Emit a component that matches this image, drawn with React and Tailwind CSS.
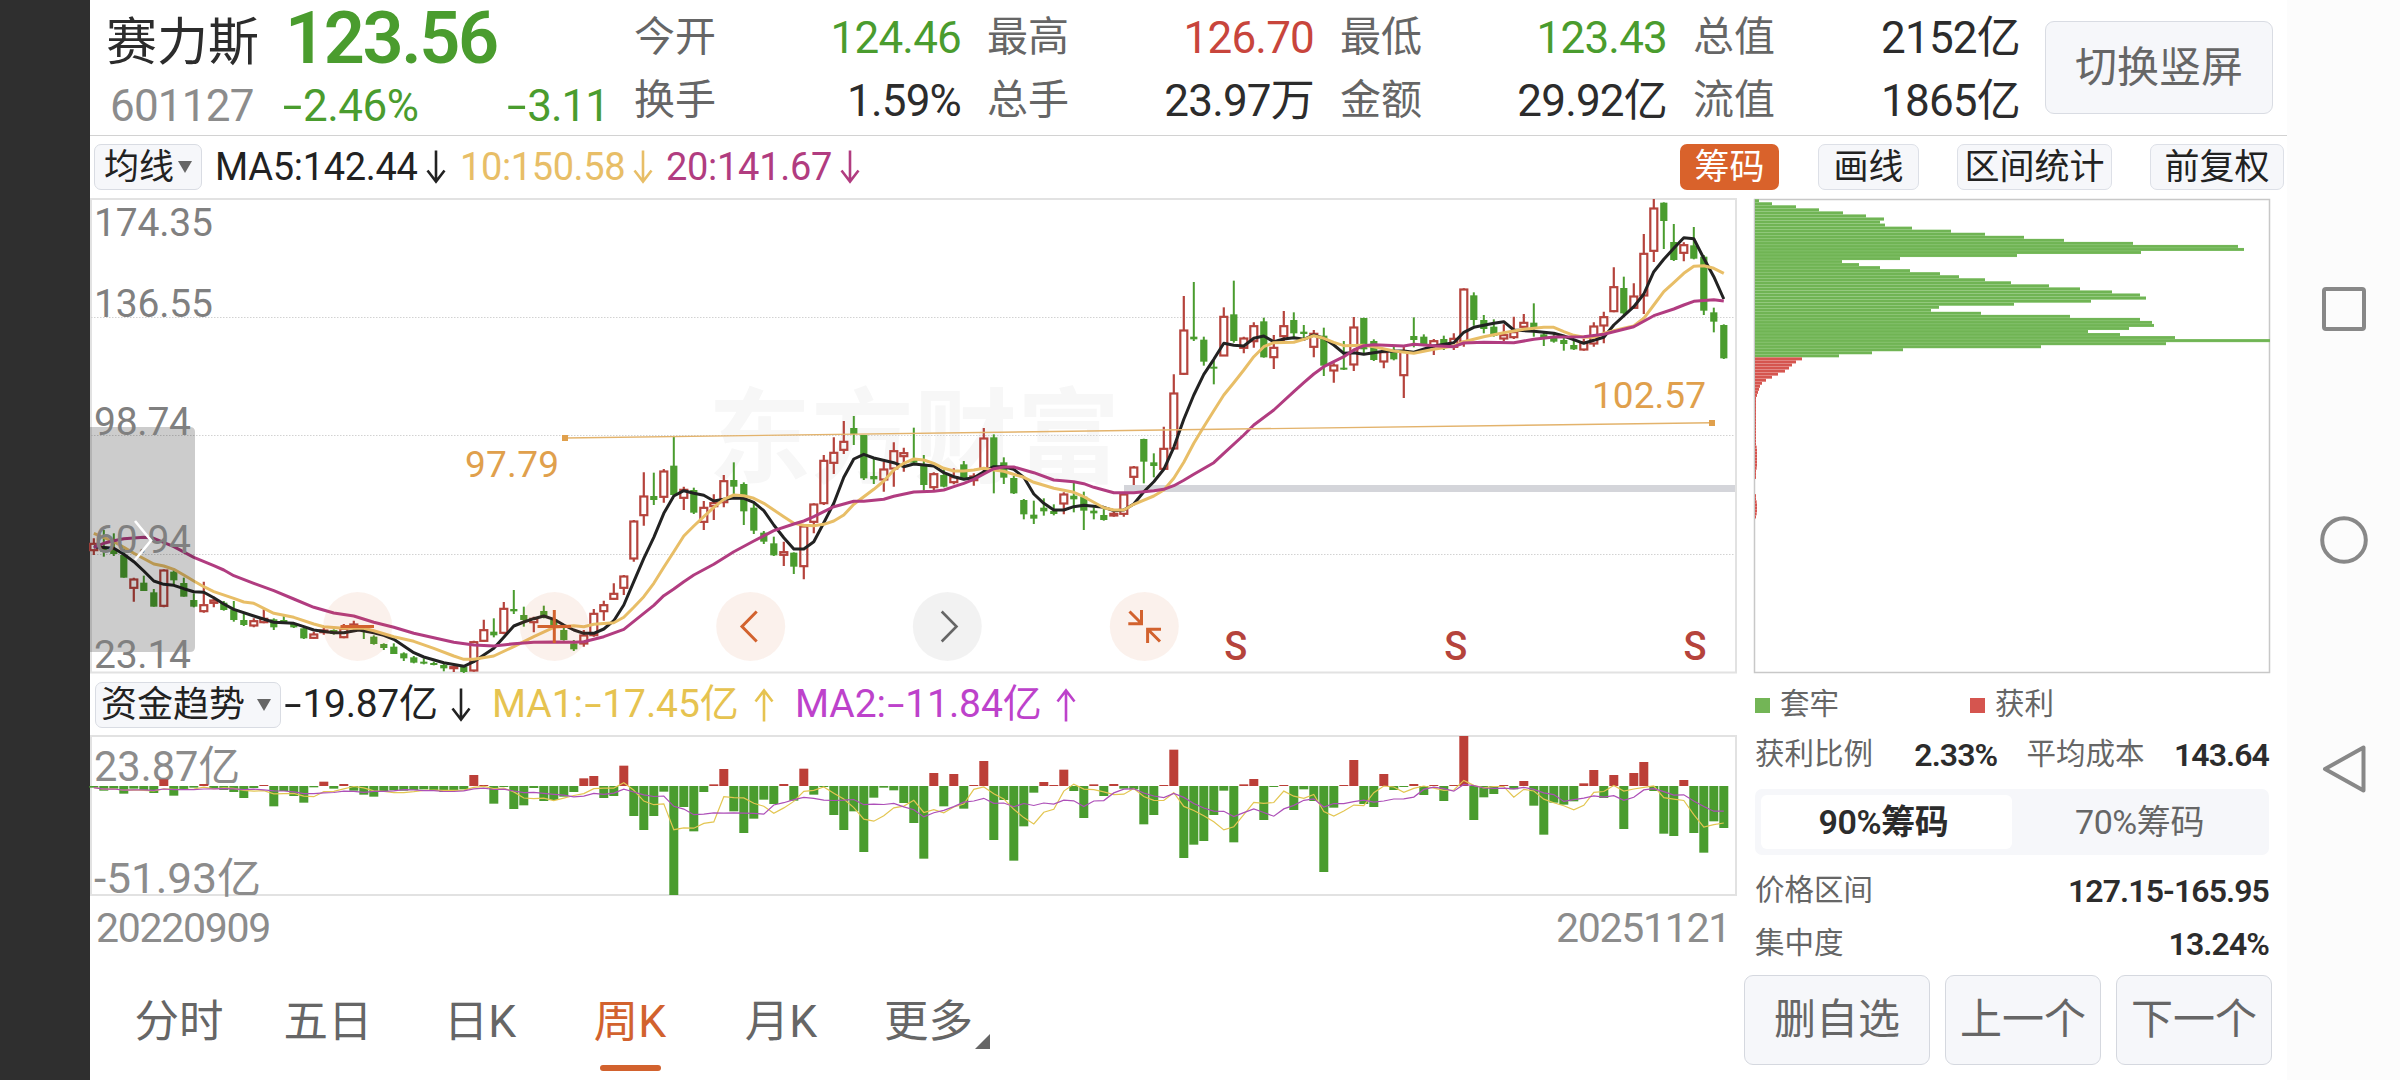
import React, { useState } from "react";

const GREEN = "#4a9c2e";
const RED = "#b5433c";
const ORANGE = "#d2622e";
const STEP = 10;
const FIRST_X = 93.8;

const xAt = (i) => FIRST_X + i * STEP;

// Weekly bars, three runs. Each bar: direction, high, body top, body bottom, low
// in thirds of a pixel below the `top` of its run.
const CANDLES = [
  {
    top: 400,
    bars: `r 415 430 452 465|g 390 440 455 470|g 400 450 462 468|g 447 465 533 533|r 533 537 565 605|g 527 548 573 573|g 567 577 620 620|r 508 510 619 622|g 510 515 541 555|g 533 549 590 590
|g 580 600 620 622|r 545 614 635 638|r 590 600 610 622|g 603 608 630 632|g 603 628 660 665|g 640 660 675 678|r 655 662 678 682|r 628 655 668 670|g 655 658 682 690|g 645 660 668 670
|g 668 672 682 684|g 682 685 715 717|r 695 702 715 717|r 684 690 698 704|g 688 690 702 704|r 672 685 713 715|r 662 672 685 690|g 680 683 690 717|g 706 710 732 734|g 730 732 744 750
|g 730 740 762 762|g 757 760 775 783|g 768 772 788 790|g 775 785 790 793|g 785 789 794 796|g 792 795 805 814|r 797 800 806 816|g 797 800 816 819|r 722 725 813 815|r 659 689 724 725
|g 655 695 706 712|r 606 625 700 703|g 570 627 634 642|g 620 645 660 680|r 650 655 668 697|g 617 633 650 655`,
  },
  {
    top: 370,
    bars: `g 740 748 770 775|g 772 780 810 812|g 810 820 838 843|r 780 795 822 830|r 717 730 797 800|r 692 704 725 752|r 640 670 688 690|r 615 618 655 675|r 450 453 567 575|r 307 378 437 467
|g 308 378 390 405|r 297 303 382 398|g 200 287 375 378|r 350 358 385 420|g 353 360 428 432|r 393 412 457 480|r 373 398 410 450|r 315 332 398 412|g 277 330 350 375|g 337 342 424 465
|g 400 413 482 492|g 483 488 515 522|g 500 520 556 558|r 515 545 556 588|g 547 548 590 612|r 465 468 590 628|r 400 402 457 490|r 255 271 401 405|r 202 247 280 312|r 153 214 241 252
|g 138 174 192 225|g 195 195 325 330|g 267 318 328 342|r 275 297 330 365|r 217 242 297 350|r 233 248 260 305|g 173 268 278 280|g 255 283 345 362|r 307 311 353 360|g 298 315 350 352
|r 295 320 338 343|g 273 283 325 330|r 310 318 332 347|r 174 204 298 305|g 193 202 292 370|g 262 277 323 342|g 318 324 370 372|g 387 390 433 448|g 392 434 446 462|g 385 413 424 437
|g 403 423 432 436|r 367 372 402 433|g 337 377 388 427|g 365 380 422 480|g 412 422 430 448|g 415 435 450 452|r 425 430 438 440|r 370 372 433 440|r 288 291 322 345|g 206 207 275 340
|g 250 277 288 322|r 170 235 298 300|r 13 69 237 238`,
  },
  {
    top: 190,
    bars: `r 318 420 553 555|g 276 440 448 453|g 440 449 515 527|g 513 530 536 583|r 352 379 498 498|g 272 373 453 458|r 440 444 475 490|r 397 407 455 473|g 383 394 502 503|r 435 472 503 537
|r 363 407 440 460|g 367 390 430 445|g 405 425 432 448|r 420 430 472 502|g 413 437 527 558|r 520 525 543 578|g 453 533 538 540|r 381 411 525 543|g 383 384 478 492|g 448 453 510 513
|r 475 485 516 535|g 470 480 508 511|r 470 482 557 624|g 382 438 450 472|g 433 440 465 468|r 447 452 470 495|g 437 447 470 480|r 430 445 472 480|r 295 297 457 470|g 307 316 390 407
|g 375 390 417 430|g 388 410 438 440|r 403 434 447 453|r 380 425 443 447|r 372 397 412 418|g 340 398 415 440|g 425 433 445 468|g 430 443 455 458|g 440 450 462 482|g 450 465 478 480
|r 447 455 480 482|r 397 408 462 470|r 365 380 408 460|r 232 290 365 367|g 260 294 370 380|r 280 318 355 357|r 132 190 318 372|r 27 54 184 216|g 37 38 93 177|g 102 156 210 213
|r 157 164 190 214|g 111 166 206 208|g 195 200 362 375|g 353 367 395 427|g 403 405 505 507`,
  },
].flatMap(({ top, bars }) =>
  bars.split("|").map((bar) => {
    const [dir, ...ys] = bar.trim().split(" ");
    return [dir, ...ys.map((y) => top + Number(y) / 3)];
  })
);

// Moving averages: pairs of bar index and height, same unit as above
const MA_LINES = [
  {
    color: "#222222",
    runs: [
      [400, "0 440 2 445 3 463 4 485 5 513 6 543 7 553 8 556 9 566 10 575 11 577 12 593 13 612 14 628 16 648 18 667 20 670 21 680 22 690 24 698 25 698 26.5 690 28 698 29 706 30 718 31 738 32 758 33 771 35 788 37 799 38 785 39 765 40 745 41 712 42 678 43 666 44 656"],
      [370, "45 738 46 748 47 765 48 780 49 790 50 790 51 777 52 752 53 705 54 635 55 565 56 502 57 430 58 378 59 362 60 370 61 376 62 393 63 388 64 384 65 385 66 397 67 422 68 465 69 503 70 537 71 537 72 515 73 458 74 400 75 322 76 267 77 253 78 264 80 278 81 290 82 282 84 288 85 308 86 320 87 328 88 323 89 305 90 290 91 290 92 298 93 322 94 372 95 400 96 420 97 420 98 410 99 406 101 412 102 422 103 420 104 402 105 365 106 335 107 298 108 232"],
      [190, "109 688 110 615 111 553 112 508 113 460 114 466 115 468 116 445 117 438 118 455 119 447 120 443 121 448 122 435 123 445 124 465 125 490 126 488 127 493 129 484 131 483 132 487 134 468 136 458 137 427 138 412 140 400 141 395 142 420 144 424 146 430 147 438 149 460 151 442 152 405 154 350 155 312 156 245 157 208 158 175 159 143 160 146 161 205 162 260 163 327"],
    ],
  },
  {
    color: "#e8be67",
    runs: [
      [400, "0 400 2 425 3 442 4 460 6 492 7 498 8 508 9 525 10 543 11 560 12 575 14 595 15 606 16 610 17 625 18 640 20 652 22 672 23 680 25 685 27 685 28 692 30 710 32 724 34 745 36 768 37 778 38 778 40 768 42 740 44 710"],
      [370, "46 772 48 767 49 770 50 763 52 758 53 742 54 712 55 680 56 640 57 592 58 545 59 498 60 468 61 440 62 412 63 388 64 375 65 377 66 385 67 400 68 420 69 440 70 460 71 466 72 467 73 463 74 453 75 435 76 403 77 380 78 358 79 333 80 300 81 280 82 267 83 270 84 280 85 295 86 303 87 303 88 300 89 295 90 300 91 304 93 322 94 337 96 355 98 367 99 380 100 397 101 413 102 420 103 420 104 403 106 378 107 360 108 325 109 277 110 220 111 170 112 122"],
      [190, "113 615 114 578 115 540 116 500 117 470 118 458 120 457 121 448 122 437 123 445 124 457 125 467 127 466 128 470 130 483 132 490 134 478 136 468 137 455 139 440 141 428 143 418 145 412 146 412 147 425 148 436 149 442 150 442 151 430 153 415 154 408 155 385 156 345 157 305 158 278 159 250 160 229 161 227 162 235 163 250"],
    ],
  },
  {
    color: "#b13c80",
    runs: [
      [400, "0 442 1 430 2 422 3 416 5 412 6 415 8 440 10 472 12 497 13 510 14 527 16 550 18 572 20 597 22 622 24 639 26 648 28 667 30 682 32 700 34 713 36 727 38 735 40 738 42 731 44 727"],
      [370, "46 816 48 817 49 815 51 800 53 778 55 730 56 706 57 677 58 657 59 635 60 615 62 583 64 545 66 513 68 482 70 462 71 453 72 440 73 425 74 410 76 394 77 394 79 388 80 379 82 366 84 364 85 360 86 350 87 340 88 328 89 312 90 296 91 291 92 291 94 308 96 330 98 335 99 341 100 352 102 368 104 368 106 362 107 358 108 347 109 331 110 313 112 278 113 250 115 195 116 165 118 120 120 65 121 38"],
      [190, "122 552 123 530 124 515 125 500 126 480 127 467 128 464 131 468 132 463 134 467 136 470 137 459 139 457 142 458 144 448 146 441 149 440 151 433 153 418 154 410 156 377 158 357 159 345 160 334 162 329 163 333"],
    ],
  },
].map(({ color, runs }) => ({
  color,
  points: runs
    .flatMap(([top, text]) => {
      const n = text.split(" ").map(Number);
      const out = [];
      for (let k = 0; k < n.length; k += 2) {
        out.push(`${xAt(n[k]).toFixed(1)},${(top + n[k + 1] / 3).toFixed(1)}`);
      }
      return out;
    })
    .join(" "),
}));

const FLOWS = [
  -5, -14, -8, -23, -8, -12, -21, 20, -29, -10, -5, 6, -6, -12, -18, -36, -6, 3, -61, -15, -30, -50, -4, 13, -8, 6, -14, -26, -32, -15,
  -13, -14, -12, -10, -12, -18, -12, -10, 33, 3, -53, -3, -69, -58, -6, -45, -42, -32, -18, 23, 30, -36, -30, 61, -90, -132, -90, -17,
  -327, -63, -136, -18, 5, 51, -76, -141, -98, -41, -54, 6, -44, 52, -26, -3, -87, -132, -76, -198, -35, -5, -13, -51, -111, -218, 39,
  -61, 36, -68, 3, 75, -162, -42, -224, -121, -20, 12, 3, 49, -15, -96, 5, -30, 6, -8, -10, -115, -87, 3, 109, -216, -176, -165, -87,
  -14, -169, 5, 21, -102, -3, 3, -72, -10, -45, -258, -65, 3, 78, -54, -63, 36, -12, -3, 6, -27, 3, -45, 3, 150, -102, -34, -24, 3,
  -10, 15, -59, -146, -50, -56, -46, 8, 48, -36, 33, -129, 39, 72, -15, -143, -150, 18, -141, -200, -106, -126,
];
const FLOW_ZERO = 786;

const average = (size) =>
  FLOWS.map((_, i) => {
    const part = FLOWS.slice(Math.max(0, i - size + 1), i + 1);
    const mean = part.reduce((a, b) => a + b, 0) / part.length;
    return `${xAt(i)},${(FLOW_ZERO - mean / 3).toFixed(1)}`;
  }).join(" ");

const CHIPS = [
  4, 17, 41, 64, 88, 111, 129, 125, 130, 157, 196, 230, 269, 309, 378, 483, 489, 386, 262, 145, 87, 104, 125, 155, 185, 204, 230,
  256, 294, 325, 357, 385, 391, 336, 259, 184, 176, 226, 315, 385, 397, 399, 374, 333, 365, 420, 515, 411, 286, 148, 117, 84,
];
const PROFIT_CHIPS = [
  47, 41, 37, 34, 30, 23, 17, 11, 7, 5, 4, 3, 2, 1, 1, 1, 1, 1, 1, 1, 1, 1, 1, 1, 1, 1, 1, 1, 1, 1.5, 2, 2, 2, 2, 2, 2, 1.5, 1, 1, 1,
  0, 0, 0, 0, 0, 1, 1, 1.5, 2, 2, 2, 1.5, 1,
];

const STATS = [
  ["今开", "124.46", "text-[#4a9c2e]", "换手", "1.59%"],
  ["最高", "126.70", "text-[#c8453c]", "总手", "23.97万"],
  ["最低", "123.43", "text-[#4a9c2e]", "金额", "29.92亿"],
  ["总值", "2152亿", "text-[#2c2c2c]", "流值", "1865亿"],
];

const TABS = [
  ["分时", "ml-[46px] w-[86px]"],
  ["五日", "ml-[63px] w-[86px]"],
  ["日K", "ml-[73px] w-[72px]"],
  ["周K", "ml-[78px] w-[72px]"],
  ["月K", "ml-[79px] w-[72px]"],
  ["更多", "ml-[68px] w-[87px]"],
];

// Roboto's hyphen is short, so it is widened for negative amounts
const Minus = () => <span className="inline-block w-[0.5em] scale-x-[1.6] text-center">-</span>;

const Arrow = ({ up, className }) => (
  <svg
    viewBox="0 0 20 34"
    className={`h-[34px] w-[20px] shrink-0 fill-none stroke-current ${up ? "rotate-180" : ""} ${className}`}
    strokeWidth="2.6"
  >
    <path d="M10 0.5V31M1.5 20.5L10 31.5L18.5 20.5" />
  </svg>
);

const Caret = ({ className }) => (
  <svg viewBox="0 0 14 12" className={`h-[12px] w-[14px] shrink-0 fill-[#666] ${className}`}>
    <path d="M0 0H14L7 12Z" />
  </svg>
);

const Reading = ({ className, children }) => (
  <span className={`shrink-0 whitespace-nowrap ${className}`}>{children}</span>
);

const Header = () => (
  <header className="flex h-[136px] shrink-0 border-b border-[#d2d2d2]">
    <div className="w-[544px] shrink-0 pl-[16px]">
      <div className="flex h-[74px] items-center">
        <span className="w-[179px] pt-[10px] text-[51px] leading-none text-[#2c2c2c]">赛力斯</span>
        <span className="pt-[4px] text-[72px] font-semibold leading-none tracking-[-2.4px] text-[#4a9c2e]">
          123.56
        </span>
      </div>
      <div className="flex h-[64px] items-center text-[44px] leading-none text-[#4a9c2e]">
        <span className="w-[175px] pl-[4px] tracking-[-0.8px] text-[#8c8c8c]">601127</span>
        <span className="w-[145px] tracking-[-0.5px]"><Minus />2.46%</span>
        <span className="w-[183px] text-right tracking-[-1px]"><Minus />3.11</span>
      </div>
    </div>
    <div className="flex shrink-0 gap-[26px] pt-[6px]">
      {STATS.map(([label, value, color, label2, value2]) => (
        <dl key={label} className="w-[327px] text-[44px] leading-none">
          <div className="flex h-[63px] items-center justify-between">
            <dt className="text-[41px] text-[#666]">{label}</dt>
            <dd className={`tracking-[-0.8px] ${color}`}>{value}</dd>
          </div>
          <div className="flex h-[63px] items-center justify-between">
            <dt className="text-[41px] text-[#666]">{label2}</dt>
            <dd className="tracking-[-0.8px] text-[#2c2c2c]">{value2}</dd>
          </div>
        </dl>
      ))}
    </div>
    <button className="ml-[25px] mt-[21px] h-[93px] w-[228px] shrink-0 rounded-[9px] border-[1.5px] border-[#d9dce3] bg-[#f6f7fa] text-[42px] leading-none text-[#666]">
      切换竖屏
    </button>
  </header>
);

const ToolButton = ({ className, active, children }) => (
  <button
    className={`h-[46px] shrink-0 rounded-[7px] text-[35px] leading-none whitespace-nowrap ${
      active ? "bg-[#d9622b] text-white" : "border border-[#dde0e7] bg-[#f6f7fa] text-[#222]"
    } ${className}`}
  >
    {children}
  </button>
);

const Toolbar = () => (
  <div className="flex h-[62px] shrink-0 items-center text-[38px] leading-none">
    <button className="ml-[4px] flex h-[46px] w-[108px] items-center rounded-[7px] border border-[#d9dce3] bg-[#f6f7fa] pl-[9px] text-[35px] text-[#222]">
      均线
      <Caret className="ml-[4px]" />
    </button>
    <Reading className="ml-[13px] w-[211px] tracking-[-0.3px] text-[#222]">MA5:142.44</Reading>
    <Arrow className="text-[#222]" />
    <Reading className="ml-[14px] w-[173px] tracking-[-0.4px] text-[#e8be67]">10:150.58</Reading>
    <Arrow className="text-[#e8be67]" />
    <Reading className="ml-[13px] w-[174px] tracking-[-0.3px] text-[#b13c80]">20:141.67</Reading>
    <Arrow className="text-[#b13c80]" />
    <div className="flex flex-1 justify-end pr-[3px]">
      <ToolButton active className="w-[99px]">筹码</ToolButton>
      <ToolButton className="ml-[39px] w-[101px]">画线</ToolButton>
      <ToolButton className="ml-[38px] w-[155px]">区间统计</ToolButton>
      <ToolButton className="ml-[38px] w-[134px]">前复权</ToolButton>
    </div>
  </div>
);

const Candle = ({ x, bar: [dir, high, top, bottom, low] }) => {
  if (dir === "g") {
    return (
      <g fill={GREEN}>
        <rect x={x - 1} y={high} width="2" height={low - high} />
        <rect x={x - 3.6} y={top} width="7.2" height={Math.max(bottom - top, 2)} />
      </g>
    );
  }
  return (
    <g fill="none" stroke={RED} strokeWidth="2.2">
      <path d={`M${x} ${high}V${top}M${x} ${bottom}V${low}`} />
      <rect x={x - 3.5} y={top + 0.5} width="7" height={Math.max(bottom - top - 1, 1)} />
    </g>
  );
};

const PriceChart = () => (
  <svg viewBox="90 198 1647 476" className="block h-[476px] w-[1647px] shrink-0 overflow-visible">
    <text x="708" y="475" fontSize="103" fontWeight="700" fill="#f7f7f7" textLength="412">
      东方财富
    </text>
    <path d="M91 199H1736V672.5H91Z" fill="none" stroke="#e2e2e2" strokeWidth="2" />
    {[317.5, 435.5, 554.5].map((y) => (
      <path key={y} d={`M91 ${y}H1735`} stroke="#d2d2d2" strokeDasharray="1.5 1.5" />
    ))}
    <rect x="1124" y="485" width="611" height="7" fill="#d4d5da" />
    {CANDLES.map((bar, i) => (
      <Candle key={i} x={xAt(i)} bar={bar} />
    ))}
    {MA_LINES.map(({ color, points }) => (
      <polyline key={color} points={points} fill="none" stroke={color} strokeWidth="3" strokeLinejoin="round" />
    ))}

    <g fill="#e0a04c" fontSize="37">
      <path d="M565 438L1712 422.7" stroke="#e3b36c" strokeWidth="1.4" />
      <rect x="562" y="435" width="6" height="6" />
      <rect x="1709" y="420" width="6" height="6" />
      <text x="465" y="477" textLength="94">97.79</text>
      <text x="1592" y="408" textLength="114">102.57</text>
    </g>

    <path d="M90 427H190Q195 427 195 432V647Q195 652 190 652H90Z" fill="#000" fillOpacity=".2" />
    <g fill="#808080" fontSize="39">
      <text x="94" y="236" textLength="119">174.35</text>
      <text x="94" y="317" textLength="119">136.55</text>
      <text x="94" y="435" textLength="97">98.74</text>
      <text x="94" y="553" textLength="97">60.94</text>
      <text x="94" y="668" textLength="97">23.14</text>
    </g>
    <path d="M135 521L151 540.5L135 560" fill="none" stroke="#fff" strokeWidth="2.6" />

    {[357.7, 554.3, 750.7, 1144.3].map((cx) => (
      <circle key={cx} cx={cx} cy="626.5" r="34.5" fill={ORANGE} fillOpacity=".09" />
    ))}
    <circle cx="947.3" cy="626.5" r="34.5" fill="#000" fillOpacity=".05" />
    <g fill="none" stroke={ORANGE} strokeWidth="3">
      <path d="M340.5 626.5H374M537.5 626.5H571M554.3 610V643" />
      <path d="M756.7 611.5L742 626.5L756.7 641.5" />
      <path d="M1129.5 611.5L1141.5 623.5M1128.3 623.7H1141.5V610" />
      <path d="M1161 629.3H1147.6V643M1148.5 630L1160 641.5" />
    </g>
    <path d="M941.7 611.5L956.5 626.5L941.7 641.5" fill="none" stroke="#666" strokeWidth="2.6" />

    <g fill={RED} fontSize="41" fontWeight="500" textAnchor="middle">
      <text x="1235.7" y="660" textLength="23" lengthAdjust="spacingAndGlyphs">S</text>
      <text x="1455.7" y="660" textLength="23" lengthAdjust="spacingAndGlyphs">S</text>
      <text x="1695" y="660" textLength="23" lengthAdjust="spacingAndGlyphs">S</text>
    </g>
  </svg>
);

const FundReadings = () => (
  <div className="flex h-[61px] shrink-0 items-center text-[39px] leading-none">
    <button className="ml-[5px] flex h-[46px] w-[186px] items-center rounded-[7px] border border-[#d9dce3] bg-[#f6f7fa] pl-[5px] text-[36px] text-[#222]">
      资金趋势
      <Caret className="ml-[12px]" />
    </button>
    <Reading className="ml-[2px] w-[168px] tracking-[-0.3px] text-[#222]"><Minus />19.87亿</Reading>
    <Arrow className="text-[#222]" />
    <Reading className="ml-[21px] w-[262px] tracking-[-0.1px] text-[#e6c350]">MA1:<Minus />17.45亿</Reading>
    <Arrow up className="text-[#e6c350]" />
    <Reading className="ml-[21px] w-[261px] tracking-[-0.1px] text-[#bd42cb]">MA2:<Minus />11.84亿</Reading>
    <Arrow up className="text-[#bd42cb]" />
  </div>
);

const FundChart = () => (
  <svg viewBox="90 735 1647 162" className="block h-[162px] w-[1647px] shrink-0 overflow-visible">
    <path d="M91 736H1736V895H91Z" fill="none" stroke="#e2e2e2" strokeWidth="2" />
    <g fill="#8c8c8c" fontSize="42">
      <text x="94" y="781" textLength="146" lengthAdjust="spacingAndGlyphs">23.87亿</text>
      <text x="94" y="893" textLength="167" lengthAdjust="spacingAndGlyphs">-51.93亿</text>
    </g>
    {FLOWS.map((v, i) => (
      <rect
        key={i}
        x={xAt(i) - 4.5}
        y={v > 0 ? FLOW_ZERO - v / 3 : FLOW_ZERO}
        width="9"
        height={Math.abs(v) / 3}
        fill={v > 0 ? "#bc3f38" : GREEN}
      />
    ))}
    <polyline points={average(5)} fill="none" stroke="#e3c652" strokeWidth="1.2" />
    <polyline points={average(10)} fill="none" stroke="#ad4fb8" strokeWidth="1.2" />
  </svg>
);

const PeriodTabs = () => {
  const [period, setPeriod] = useState("周K");
  return (
    <div className="flex h-[105px] text-[44.5px] leading-none">
      {TABS.map(([name, box]) => (
        <button
          key={name}
          onClick={() => setPeriod(name)}
          className={`flex shrink-0 flex-col items-center whitespace-nowrap pt-[25px] ${box} ${
            name === period ? "text-[#d2622e]" : "text-[#666]"
          }`}
        >
          {name}
          {name === period && <i className="mt-[20px] h-[6px] w-[61px] rounded-full bg-[#d2622e]" />}
        </button>
      ))}
      <svg viewBox="0 0 15 15" className="ml-[3px] mt-[59px] h-[15px] w-[15px] fill-[#666]">
        <path d="M15 0V15H0Z" />
      </svg>
    </div>
  );
};

const ChipChart = () => (
  <svg viewBox="1753 198 518 476" className="-ml-[2px] block h-[476px] w-[518px]">
    <path d="M1754.5 199.5H2269.5V672.5H1754.5Z" fill="none" stroke="#c8c8c8" strokeWidth="1.5" />
    {CHIPS.map((w, i) => (
      <g key={i}>
        <rect x="1755" y={199.3 + i * 3.04} width={w} height="3.04" fill="#8fc979" />
        <rect x="1755" y={199.5 + i * 3.04} width={w} height="2.5" fill="#70b454" />
      </g>
    ))}
    {PROFIT_CHIPS.map((w, i) => (
      <g key={i}>
        <rect x="1755" y={357.4 + i * 3.04} width={w} height="3.04" fill="#e58a86" />
        <rect x="1755" y={357.6 + i * 3.04} width={w} height="2.5" fill="#d5554f" />
      </g>
    ))}
  </svg>
);

const ChipPanel = () => (
  <aside className="w-[514px] text-[29.5px] leading-none text-[#666]">
    <ChipChart />
    <div className="flex h-[62px] items-center">
      <i className="h-[15px] w-[15px] bg-[#73b556]" />
      <span className="ml-[10px] w-[190px]">套牢</span>
      <i className="h-[15px] w-[15px] bg-[#d5554f]" />
      <span className="ml-[10px]">获利</span>
    </div>
    <div className="flex h-[38px] items-center justify-between">
      <span>获利比例</span>
      <b className="ml-[12px] text-[32px] font-semibold tracking-[-0.9px] text-[#2c2c2c]">2.33%</b>
      <span>平均成本</span>
      <b className="text-[32px] font-semibold tracking-[-0.9px] text-[#2c2c2c]">143.64</b>
    </div>
    <div className="mt-[15px] flex h-[66px] rounded-[7px] bg-[#f6f7fa] p-[6px] text-[34px]">
      <button className="w-[251px] rounded-[6px] bg-white pr-[6px] font-semibold tracking-[-0.4px] text-[#2c2c2c]">
        90%筹码
      </button>
      <button className="flex-1 pl-[4px] tracking-[-0.4px]">70%筹码</button>
    </div>
    <div className="mt-[9px] flex h-[53px] items-center justify-between">
      <span>价格区间</span>
      <b className="text-[32px] font-semibold tracking-[-0.9px] text-[#2c2c2c]">127.15-165.95</b>
    </div>
    <div className="flex h-[53px] items-center justify-between">
      <span>集中度</span>
      <b className="text-[32px] font-semibold tracking-[-0.9px] text-[#2c2c2c]">13.24%</b>
    </div>
    <div className="-ml-[11px] mt-[5px] flex w-[528px] gap-[15px] text-[42px]">
      <button className="h-[90px] w-[186px] rounded-[9px] border-[1.5px] border-[#d5d8df] bg-[#f6f7fa]">删自选</button>
      <button className="h-[90px] w-[156px] rounded-[9px] border-[1.5px] border-[#d5d8df] bg-[#f6f7fa]">上一个</button>
      <button className="h-[90px] w-[156px] rounded-[9px] border-[1.5px] border-[#d5d8df] bg-[#f6f7fa]">下一个</button>
    </div>
  </aside>
);

const SystemNav = () => (
  <nav className="flex w-[113px] shrink-0 flex-col items-center bg-[#fcfcfc] pt-[285px]">
    <svg viewBox="0 0 48 48" className="h-[48px] w-[48px] fill-none stroke-[#888]" strokeWidth="4">
      <rect x="4" y="4" width="40" height="40" rx="2" />
    </svg>
    <svg viewBox="0 0 50 50" className="mt-[182px] h-[50px] w-[50px] fill-none stroke-[#888]" strokeWidth="4">
      <circle cx="25" cy="25" r="21.8" />
    </svg>
    <svg
      viewBox="0 0 48 52"
      className="mt-[178px] h-[52px] w-[48px] fill-none stroke-[#888]"
      strokeWidth="4"
      strokeLinejoin="round"
    >
      <path d="M43.5 4.5V47.5L5 26Z" />
    </svg>
  </nav>
);

const App = () => (
  <div className="flex h-[1080px] w-[2400px] overflow-hidden bg-white font-[Roboto,'Noto_Sans_CJK_SC',sans-serif]">
    <div className="w-[90px] shrink-0 bg-[#2f2f2f]" />
    <main className="flex w-[2197px] shrink-0 flex-col">
      <Header />
      <Toolbar />
      <div className="flex flex-1">
        <section className="flex w-[1665px] shrink-0 flex-col">
          <PriceChart />
          <FundReadings />
          <FundChart />
          <div className="flex h-[78px] w-[1646px] shrink-0 justify-between pl-[6px] pr-[6px] pt-[11px] text-[41px] leading-none tracking-[-1.3px] text-[#8c8c8c]">
            <span>20220909</span>
            <span>20251121</span>
          </div>
          <PeriodTabs />
        </section>
        <ChipPanel />
      </div>
    </main>
    <SystemNav />
  </div>
);

export default App;
